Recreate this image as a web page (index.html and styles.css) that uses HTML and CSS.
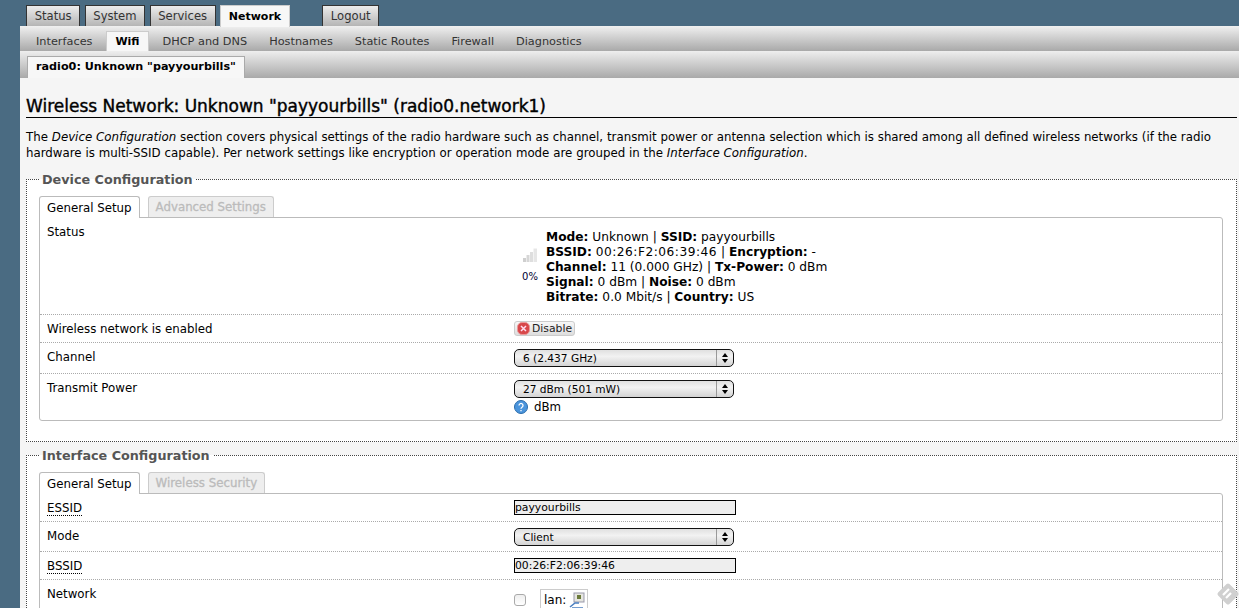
FILE: index.html
```html
<!DOCTYPE html>
<html lang="en">
<head>
    <meta charset="UTF-8">
    <title>Wireless Network</title>
    <link rel="stylesheet" href="styles.css">
</head>
<body>
    <!-- Menu principal -->
    <ul class="menu">
        <li><a>Status</a></li>
        <li><a>System</a></li>
        <li><a>Services</a></li>
        <li class="active"><a>Network</a></li>
        <li class="logout"><a>Logout</a></li>
    </ul>

    <div class="maincontent">
        <ul class="submenu">
            <li><a>Interfaces</a></li>
            <li class="active"><a>Wifi</a></li>
            <li><a>DHCP and DNS</a></li>
            <li><a>Hostnames</a></li>
            <li><a>Static Routes</a></li>
            <li><a>Firewall</a></li>
            <li><a>Diagnostics</a></li>
        </ul>
        <div class="radiobar">
            <a class="radiotab">radio0: Unknown "payyourbills"</a>
        </div>

        <div class="content">
            <h2>Wireless Network: Unknown "payyourbills" (radio0.network1)</h2>
            <p class="intro">The <em>Device Configuration</em> section covers physical settings of the radio hardware such as channel, transmit power or antenna selection which is shared among all defined wireless networks (if the radio hardware is multi-SSID capable). Per network settings like encryption or operation mode are grouped in the <em>Interface Configuration</em>.</p>

            <fieldset class="section">
                <legend>Device Configuration</legend>
                <ul class="tabs">
                    <li class="active">General Setup</li>
                    <li>Advanced Settings</li>
                </ul>
                <div class="panel">
                    <div class="row row-status">
                        <div class="label">Status</div>
                        <div class="field status">
                            <div class="signal">
                                <svg width="16" height="16" viewBox="0 0 16 16">
                                    <path d="M1 11h3v4H1z" fill="#cfcfcf"/>
                                    <path d="M4.500 8h3v7h-3z" fill="#d6d6d6"/>
                                    <path d="M8 5h3v10H8z" fill="#dedede"/>
                                    <path d="M11.500 1.500h3.500V15h-3.500z" fill="#e6e6e6"/>
                                </svg>
                                <small>0%</small>
                            </div>
                            <div class="status-text">
                                <b>Mode:</b> Unknown | <b>SSID:</b> payyourbills<br>
                                <b>BSSID:</b> <span class="mac">00:26:F2:06:39:46</span> | <b>Encryption:</b> -<br>
                                <b>Channel:</b> 11 (0.000 GHz) | <b>Tx-Power:</b> 0 dBm<br>
                                <b>Signal:</b> 0 dBm | <b>Noise:</b> 0 dBm<br>
                                <b>Bitrate:</b> 0.0 Mbit/s | <b>Country:</b> US
                            </div>
                        </div>
                    </div>
                    <div class="row row-enabled">
                        <div class="label">Wireless network is enabled</div>
                        <div class="field">
                            <button class="btn-disable">
                                <svg width="13" height="13" viewBox="0 0 13 13">
                                    <rect x="0.500" y="0.500" width="12" height="12" rx="4.500" fill="#d8474a" stroke="#e99a9a"/>
                                    <path d="M4 4l5 5M9 4l-5 5" stroke="#fde" stroke-width="1.500"/>
                                </svg>Disable
                            </button>
                        </div>
                    </div>
                    <div class="row row-select">
                        <div class="label">Channel</div>
                        <div class="field"><div class="select">6 (2.437 GHz)</div></div>
                    </div>
                    <div class="row row-power">
                        <div class="label">Transmit Power</div>
                        <div class="field">
                            <div class="select">27 dBm (501 mW)</div>
                            <div class="hint">
                                <svg width="14" height="14" viewBox="0 0 14 14">
                                    <circle cx="7" cy="7" r="6.500" fill="#4a94dc" stroke="#2a6cab"/>
                                    <path d="M5 5.400a2 2 0 1 1 3 1.800c-.7.4-1 .7-1 1.500M7 10v1.200" fill="none" stroke="#fff" stroke-width="1.300"/>
                                </svg>
                                dBm
                            </div>
                        </div>
                    </div>
                </div>
            </fieldset>

            <fieldset class="section">
                <legend>Interface Configuration</legend>
                <ul class="tabs">
                    <li class="active">General Setup</li>
                    <li>Wireless Security</li>
                </ul>
                <div class="panel">
                    <div class="row row-input">
                        <div class="label"><span class="dotted">ESSID</span></div>
                        <div class="field"><div class="input">payyourbills</div></div>
                    </div>
                    <div class="row row-mode">
                        <div class="label">Mode</div>
                        <div class="field"><div class="select">Client</div></div>
                    </div>
                    <div class="row row-input">
                        <div class="label"><span class="dotted">BSSID</span></div>
                        <div class="field"><div class="input">00:26:F2:06:39:46</div></div>
                    </div>
                    <div class="row row-network">
                        <div class="label">Network</div>
                        <div class="field network">
                            <span class="checkbox"></span>
                            <span class="ifbadge">lan:
                                <svg width="16" height="17" viewBox="0 0 16 17">
                                    <rect x="5" y="1" width="10" height="9" fill="#e6e6e0" stroke="#99a"/>
                                    <rect x="8" y="3" width="4" height="4" fill="#6b7a3a"/>
                                    <path d="M1 15l5-4h4M3 16h11" stroke="#4a7fc0" stroke-width="1.600" fill="none"/>
                                </svg>
                            </span>
                        </div>
                    </div>
                </div>
            </fieldset>
        </div>
    </div>

    <svg class="corner" width="24" height="24" viewBox="0 0 24 24">
        <rect x="4" y="4" width="16" height="16" rx="2" transform="rotate(45 12 12)" fill="#d0d0d0"/>
        <path d="M7 13l6-6M10 16l5-5" stroke="#fff" stroke-width="2.200"/>
    </svg>
</body>
</html>
```

FILE: styles.css
```css
html, body {
    height: 608px;
    overflow: hidden;
}
body {
    margin: 0;
    background-color: #4a6b82;
    font-family: "DejaVu Sans", Verdana, sans-serif;
    font-size: 11.8px;
    color: #000;
}
ul {
    list-style: none;
    margin: 0;
    padding: 0;
}

/* Menu principal */
.menu {
    display: flex;
    gap: 4.3px;
    height: 21px;
    padding: 5px 0 0 26px;
}
.menu li {
    height: 20px;
    padding: 0 7.7px;
    line-height: 21px;
    font-size: 11.6px;
    color: #333;
    background: linear-gradient(#ececec, #b5b5b5);
    border: 1px solid #333;
    border-bottom: none;
}
.menu li.active {
    background: #f7f7f7;
    border-color: #ccc;
    color: #000;
    font-size: 11px;
    font-weight: bold;
    height: 21px;
}
.menu li.logout {
    margin-left: 28px;
}

.maincontent {
    margin-left: 20px;
    background-color: #f5f5f5;
    height: 582px;
}

.submenu {
    display: flex;
    height: 25px;
    padding-left: 8px;
    gap: 0;
    background: linear-gradient(#f0f0f0, #a9a9a9);
    box-sizing: border-box;
    padding-top: 5px;
}
.submenu li {
    padding: 0 8px;
    margin-right: 6px;
    line-height: 21px;
    font-size: 11.3px;
    color: #333;
}
.submenu li.active {
    background: #f7f7f7;
    border: 1px solid #ccc;
    border-bottom: none;
    font-size: 11px;
    font-weight: bold;
    color: #000;
    line-height: 19px;
}

.radiobar {
    height: 27px;
    box-sizing: border-box;
    padding: 5px 0 0 7px;
    background: linear-gradient(#eee, #a9a9a9);
}
.radiotab {
    display: inline-block;
    height: 21px;
    padding: 0 8px;
    line-height: 20px;
    font-size: 11.2px;
    font-weight: bold;
    background: #f7f7f7;
    border: 1px solid #aaa;
    border-bottom: none;
}

.content {
    padding: 0 2px 0 6px;
}
h2 {
    margin: 18px 0 0;
    font-size: 17px;
    font-weight: normal;
    -webkit-text-stroke: 0.4px #000;
    line-height: 20px;
    border-bottom: 1px solid #000;
    padding-bottom: 1px;
}
.intro {
    margin: 11px 0 0;
    line-height: 16px;
    word-spacing: 0.1px;
}

fieldset.section {
    margin: 8px 0 0;
    padding: 6px 13px 20px 12px;
    background: #fff;
    border: 1px dotted #444;
    min-width: 0;
    box-sizing: border-box;
}
fieldset.section + fieldset.section {
    margin-top: 3px;
}
legend {
    font-size: 12.75px;
    font-weight: bold;
    color: #555;
    padding: 2px 3px 0;
    margin-left: 0;
    line-height: 18px;
}

.tabs {
    display: flex;
    gap: 8px;
    height: 22px;
    align-items: flex-end;
}
.tabs li {
    box-sizing: border-box;
    height: 21px;
    padding: 0 7px;
    line-height: 20px;
    color: #bbb;
    background: #eee;
    border: 1px solid #ccc;
    border-bottom: none;
    border-radius: 3px 3px 0 0;
    -webkit-text-stroke: 0.3px #bbb;
}
.tabs li.active {
    height: 22px;
    color: #000;
    background: #fff;
    border-color: #bbb;
    line-height: 22px;
    position: relative;
    top: 1px;
    -webkit-text-stroke: 0;
}

.panel {
    border: 1px solid #bbb;
    border-radius: 0 3px 3px 3px;
}
.row {
    display: flex;
    border-bottom: 1px dotted #aaa;
    box-sizing: border-box;
}
.row:last-child {
    border-bottom: none;
}
.label {
    width: 474px;
    padding: 6px 0 0 7px;
    box-sizing: border-box;
    line-height: 16px;
}
.field {
    padding-top: 6px;
}
.row-status { height: 97px; }
.row-enabled { height: 28px; }
.row-select { height: 31px; }
.row-power { height: 46px; }
.row-input { height: 28px; }
.row-mode { height: 30px; }
.row-network { height: 40px; }

.status {
    display: flex;
    align-items: center;
    height: 74px;
    padding-top: 12px;
}
.signal {
    width: 32px;
    padding-bottom: 5px;
    text-align: center;
    display: flex;
    flex-direction: column;
    align-items: center;
    color: #003;
}
.signal small {
    font-size: 10px;
    margin-top: 8px;
}
.status-text {
    line-height: 15px;
    font-size: 12.2px;
}
.mac {
    letter-spacing: 0.5px;
}

.btn-disable {
    display: flex;
    align-items: center;
    gap: 2px;
    height: 15px;
    padding: 0 2px;
    font-family: inherit;
    font-size: 10.8px;
    background: linear-gradient(#f8f8f8, #ddd);
    border: 1px solid #ccc;
    border-radius: 3px;
    color: #222;
}

.select {
    box-sizing: border-box;
    width: 220px;
    height: 18px;
    line-height: 16px;
    padding-left: 8px;
    font-size: 10.6px;
    border: 1px solid #111;
    border-radius: 5px;
    background: linear-gradient(to left, transparent 16px, #999 16px, #999 17px, transparent 17px), linear-gradient(#e0e0e0, #f2f2f2 40%, #d4d4d4);
    position: relative;
}
.select::after {
    content: "";
    position: absolute;
    right: 5px;
    top: 3px;
    width: 0;
    height: 0;
    border-left: 3px solid transparent;
    border-right: 3px solid transparent;
    border-bottom: 4px solid #000;
}
.select::before {
    content: "";
    position: absolute;
    right: 5px;
    bottom: 3px;
    width: 0;
    height: 0;
    border-left: 3px solid transparent;
    border-right: 3px solid transparent;
    border-top: 4px solid #000;
}
.hint {
    display: flex;
    align-items: center;
    gap: 6px;
    margin-top: 2px;
    height: 14px;
}
.dotted {
    border-bottom: 1px dotted #000;
}

.input {
    box-sizing: border-box;
    width: 222px;
    height: 15px;
    line-height: 14px;
    border: 1px solid #000;
    background: #eee;
    font-size: 10.8px;
}

.network {
    display: flex;
    gap: 14px;
    align-items: flex-start;
    padding-top: 9px;
}
.checkbox {
    width: 10px;
    height: 10px;
    margin-top: 5px;
    border: 1px solid #aaa;
    border-radius: 3px;
    background: linear-gradient(#eee, #fff);
}
.ifbadge {
    display: flex;
    align-items: center;
    gap: 3px;
    border: 1px solid #ccc;
    padding: 0 2px 0 3px;
    height: 20px;
    font-size: 12px;
}

.corner {
    position: absolute;
    right: -1px;
    bottom: 2px;
}
```
